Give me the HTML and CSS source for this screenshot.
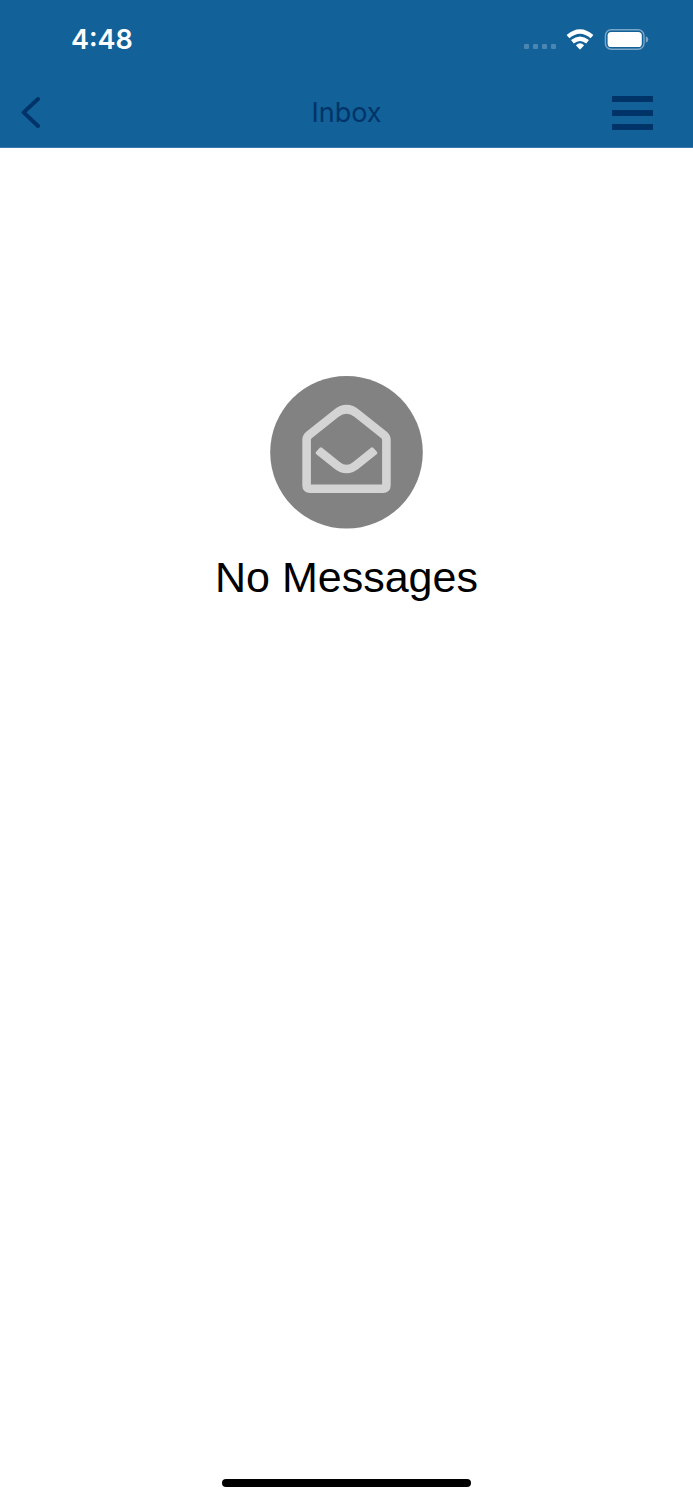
FILE: index.html
```html
<!DOCTYPE html>
<html lang="en">
<head>
    <meta charset="UTF-8">
    <meta name="viewport" content="width=device-width, initial-scale=1.0">
    <title>Inbox</title>
    <link rel="stylesheet" href="styles.css">
</head>
<body>
    <header class="header">
        <div class="status-bar">
            <span class="time">4:48</span>
            <div class="status-icons">
                <div class="signal"><i></i><i></i><i></i><i></i></div>
                <svg class="wifi" width="28" height="21" viewBox="0 0 28 21" aria-hidden="true">
                    <g fill="none" stroke="#fff">
                        <path d="M2 7.6Q14 -2.6 26 7.6" stroke-width="4.2"/>
                        <path d="M6.4 12.8Q14 6.6 21.6 12.8" stroke-width="4.4"/>
                    </g>
                    <path d="M9.9 16.3Q14 12.3 18.1 16.3L14.7 20Q14 20.8 13.3 20Z" fill="#fff"/>
                </svg>
                <svg class="battery" width="45" height="22" viewBox="0 0 45 22" aria-hidden="true">
                    <rect x="1.4" y="0.8" width="38.6" height="19.4" rx="5.8" fill="none" stroke="#7aa6c7" stroke-width="1.4"/>
                    <rect x="3.6" y="3" width="34.2" height="15" rx="3.6" fill="#fff"/>
                    <path d="M41.8 7.2Q44.3 8.2 44.3 10.5Q44.3 12.8 41.8 13.8Z" fill="#7aa6c7"/>
                </svg>
            </div>
        </div>
        <nav class="nav-bar">
            <button class="back" aria-label="Back">
                <svg width="20" height="32" viewBox="0 0 20 32" aria-hidden="true">
                    <path d="M17 2L2.6 15.4L17 29" fill="none" stroke="#003468" stroke-width="4" stroke-linecap="round" stroke-linejoin="round"/>
                </svg>
            </button>
            <h1>Inbox</h1>
            <button class="menu" aria-label="Menu">
                <span></span><span></span><span></span>
            </button>
        </nav>
    </header>

    <main class="empty">
        <svg width="153" height="153" viewBox="0 0 153 153" aria-hidden="true">
            <circle cx="76.5" cy="76.3" r="76.3" fill="#828282"/>
            <path d="M36.6 64Q36.6 61 39 59L66 37.5Q76.5 29.1 87 37.5L114 59Q116.4 61 116.4 64V109.5Q116.4 112.8 113 112.8H40Q36.6 112.8 36.6 109.5Z" fill="none" stroke="#d4d4d4" stroke-width="8.6"/>
            <path d="M47.4 77L64.3 90.4Q76.5 100.7 88.7 90.4L105.6 77L102 73L84 87.5Q76.5 93.5 69 87.5L51 73Z" fill="#d4d4d4" stroke="#d4d4d4" stroke-width="3.4" stroke-linejoin="round"/>
        </svg>
        <p>No Messages</p>
    </main>

    <footer class="home">
        <div class="home-bar"></div>
    </footer>
</body>
</html>
```
FILE: styles.css
```css
* {
    box-sizing: border-box;
}

body {
    font-family: Inter, "Liberation Sans", sans-serif;
    background-color: #fff;
    color: #000;
    margin: 0;
    min-height: 100vh;
    display: flex;
    flex-direction: column;
}

button {
    background: none;
    border: none;
    padding: 0;
    cursor: pointer;
}

/* Blue top area */
.header {
    background-color: #126199;
    border-bottom: 1px solid #3a7aaa;
}

.status-bar {
    display: flex;
    justify-content: space-between;
    align-items: center;
    height: 79px;
    padding: 0 44px 0 71px;
}

.time {
    color: #fff;
    font-size: 27px;
    font-weight: 600;
    line-height: 34px;
}

.status-icons {
    display: flex;
    align-items: center;
    gap: 10px;
}

.signal {
    display: flex;
    gap: 4px;
    padding-top: 13px;
}

.signal i {
    width: 5px;
    height: 5px;
    border-radius: 1px;
    background-color: #4a86b1;
}

/* Title row */
.nav-bar {
    display: grid;
    grid-template-columns: 1fr auto 1fr;
    align-items: center;
    height: 68px;
    padding: 0 21px;
}

.nav-bar h1 {
    margin: 0;
    color: #003468;
    font-size: 27px;
    font-weight: 400;
    line-height: 34px;
}

.back {
    justify-self: start;
    display: flex;
}

.menu {
    justify-self: end;
    display: flex;
    flex-direction: column;
    gap: 8px;
    width: 41px;
    margin-right: 19px;
}

.menu span {
    height: 6px;
    background-color: #003468;
}

/* Empty inbox */
.empty {
    flex: 1;
    display: flex;
    flex-direction: column;
    align-items: center;
    padding-top: 228px;
}

.empty p {
    margin: 20px 0 0;
    font-family: "Liberation Sans", Arial, sans-serif;
    font-size: 43px;
    line-height: 56px;
}

.home {
    display: flex;
    justify-content: center;
    padding-bottom: 13px;
}

.home-bar {
    width: 36%;
    height: 8px;
    border-radius: 4px;
    background-color: #000;
}
```
